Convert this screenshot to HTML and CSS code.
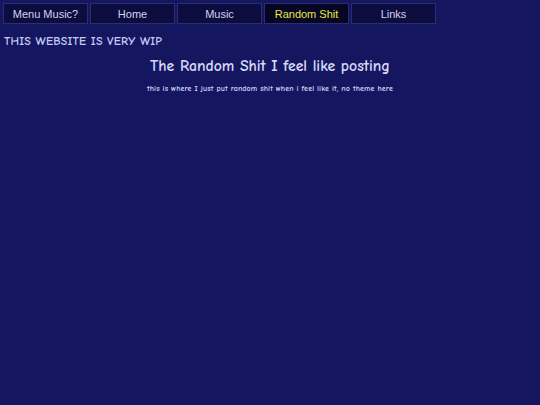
FILE: index.html
```html
<!DOCTYPE html>
<html>
<head>
<meta charset="utf-8">
<link rel="stylesheet" href="styles.css">
</head>
<body>
<nav class="menu">
  <a class="btn">Menu Music?</a>
  <a class="btn">Home</a>
  <a class="btn">Music</a>
  <a class="btn active">Random Shit</a>
  <a class="btn">Links</a>
</nav>
<h2 class="wip">THIS WEBSITE IS VERY WIP</h2>
<h1 class="title">The Random Shit I feel like posting</h1>
<p class="sub">this is where I just put random shit when i feel like it, no theme here</p>
</body>
</html>
```
FILE: styles.css
```css
html, body {
  margin: 0;
  padding: 0;
  background: #141660;
  width: 540px;
  height: 405px;
  overflow: hidden;
}
body {
  font-family: "Comic Sans MS", "Comic Neue", "DejaVu Sans", cursive;
  color: #d2d2f4;
}
.menu {
  display: flex;
  gap: 2px;
  padding: 3px 0 0 3px;
}
.btn {
  box-sizing: border-box;
  width: 85px;
  height: 21px;
  display: flex;
  align-items: center;
  justify-content: center;
  background: #0c0c3e;
  border: 1px solid #2b2d72;
  font-family: "Liberation Sans", Arial, sans-serif;
  font-size: 11px;
  color: #d4d4f0;
}
.btn.active {
  background: #060622;
  color: #e8e840;
}
.wip {
  margin: 10px 0 0 4px;
  font-size: 12px;
  font-weight: bold;
  color: #c8c8f2;
  letter-spacing: 0.2px;
}
.title {
  margin: 9px 0 0 0;
  text-align: center;
  font-size: 15.7px;
  font-weight: bold;
  color: #d8d8f6;
}
.sub {
  margin: 9px 0 0 0;
  text-align: center;
  font-size: 8px;
  font-weight: bold;
  letter-spacing: 0.1px;
  color: #d0d0f0;
}
```
